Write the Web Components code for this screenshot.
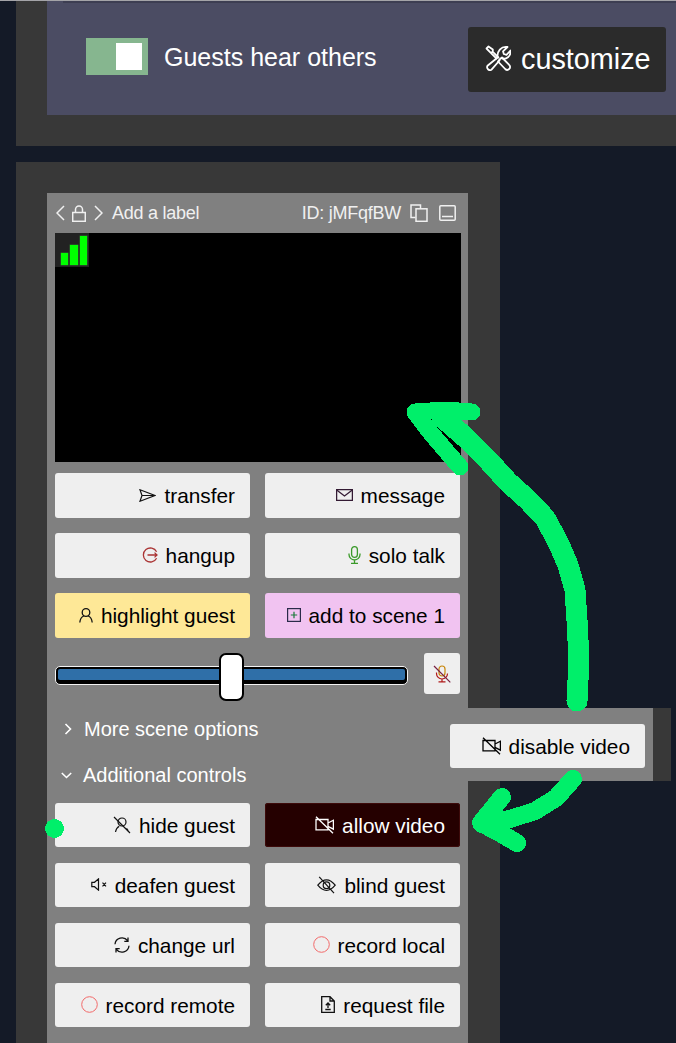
<!DOCTYPE html>
<html>
<head>
<meta charset="utf-8">
<style>
    html, body { margin: 0; height: 1043px; overflow: hidden; background: #141a27; }
    body { font-family: "Liberation Sans", Arial, sans-serif; position: relative; box-sizing: border-box; border-top: 1px solid #a4a4a8; }
</style>
</head>
<body>
<scene-panel>
    <toggle-row></toggle-row>
</scene-panel>
<guest-card>
    <ctrl-btn slot="main" icon="transfer">transfer</ctrl-btn>
    <ctrl-btn slot="main" icon="message">message</ctrl-btn>
    <ctrl-btn slot="main" icon="hangup">hangup</ctrl-btn>
    <ctrl-btn slot="main" icon="mic">solo talk</ctrl-btn>
    <ctrl-btn slot="main" icon="user" tone="yellow">highlight guest</ctrl-btn>
    <ctrl-btn slot="main" icon="plus" tone="pink">add to scene 1</ctrl-btn>
    <ctrl-btn slot="extra" short icon="userslash">hide guest</ctrl-btn>
    <ctrl-btn slot="extra" short icon="camslash" tone="dark">allow video</ctrl-btn>
    <ctrl-btn slot="extra" short icon="deafen">deafen guest</ctrl-btn>
    <ctrl-btn slot="extra" short icon="eyeslash">blind guest</ctrl-btn>
    <ctrl-btn slot="extra" short icon="sync">change url</ctrl-btn>
    <ctrl-btn slot="extra" short icon="record">record local</ctrl-btn>
    <ctrl-btn slot="extra" short icon="record">record remote</ctrl-btn>
    <ctrl-btn slot="extra" short icon="file">request file</ctrl-btn>
</guest-card>
<video-callout>
    <ctrl-btn short icon="camslash">disable video</ctrl-btn>
</video-callout>
<ink-arrows></ink-arrows>

<script>
    const icons = {
        transfer: `<svg width="17" height="13" viewBox="0 0 17 13" fill="none" stroke="#111" stroke-width="1.200"><path d="M1 .8 16 6.500 1 12.200 3 6.500ZM3 6.500H16"/></svg>`,
        message: `<svg width="17" height="12" viewBox="0 0 17 12" fill="none" stroke="#331a33" stroke-width="1.300"><rect x=".6" y=".6" width="15.800" height="10.800"/><path d="M1 1.200 8.500 7 16 1.200"/></svg>`,
        hangup: `<svg width="16" height="16" viewBox="0 0 16 16" fill="none" stroke="#a33" stroke-width="1.300"><path d="M14.600 4.800A7 7 0 1 0 14.600 11.200M5.500 8H15M12.500 5.600 15 8 12.500 10.400"/></svg>`,
        mic: `<svg width="13" height="18" viewBox="0 0 13 18" fill="none" stroke="#3a9a2a" stroke-width="1.300"><rect x="3.600" y=".7" width="5.800" height="10.600" rx="2.900"/><path d="M1 7.500V8.500A5.500 5.500 0 0 0 12 8.500V7.500M6.500 14V17M3 17.300H10"/></svg>`,
        user: `<svg width="14" height="15" viewBox="0 0 14 15" fill="none" stroke="#111" stroke-width="1.300"><circle cx="7" cy="4.500" r="3.800"/><path d="M.8 14.500C1.200 10.500 3.500 8.500 4.800 8M13.200 14.500C12.800 10.500 10.500 8.500 9.200 8"/></svg>`,
        plus: `<svg width="14" height="14" viewBox="0 0 14 14" fill="none" stroke="#2a2a4a" stroke-width="1.200"><rect x=".6" y=".6" width="12.800" height="12.800"/><path stroke="#1a7a3a" d="M7 3.800V10.200M3.800 7H10.200"/></svg>`,
        userslash: `<svg width="18" height="18" viewBox="0 0 18 18" fill="none" stroke="#111" stroke-width="1.200"><circle cx="9" cy="6" r="4"/><path d="M2.500 16C3 12.800 5 11 6.200 10.300M15.500 16C15.200 14.500 14.500 13.200 13.600 12.400M1 1 17 17"/></svg>`,
        camslash: `<svg width="19" height="18" viewBox="0 0 19 18" fill="none" stroke="currentColor" stroke-width="1.300"><path d="M1 .7 18 17.300M1 3.500V13.800H13V3.500ZM13 7 18.400 4.200V13.200L13 10.400"/></svg>`,
        deafen: `<svg width="16" height="13" viewBox="0 0 16 13" fill="none" stroke="#111" stroke-width="1.200"><path d="M.8 4.300H3.500L7.500 .9V12.100L3.500 8.700H.8ZM11.500 4.700 15 8.300M15 4.700 11.500 8.300"/></svg>`,
        eyeslash: `<svg width="19" height="18" viewBox="0 0 19 18" fill="none" stroke="#111" stroke-width="1.200"><path d="M.8 9.200C4 5 6.800 3.800 9.500 3.800S15 5 18.200 9.200C15 13.200 12.200 14.400 9.500 14.400S4 13.200 .8 9.200Z"/><circle cx="9.500" cy="9.200" r="3.300"/><path d="M2.200 .8 17 17.200"/></svg>`,
        sync: `<svg width="16" height="16" viewBox="0 0 16 16" fill="none" stroke="#111" stroke-width="1.300"><path d="M1 7.200A7 7 0 0 1 13.600 3.700M14 .6V4.300H10.300M15 8.800A7 7 0 0 1 2.400 12.300M2 15.400V11.700H5.700"/></svg>`,
        record: `<svg width="17" height="17" viewBox="0 0 17 17" fill="none" stroke="#f26a6a" stroke-width="1"><circle cx="8.500" cy="8.500" r="7.800"/></svg>`,
        file: `<svg width="14" height="17" viewBox="0 0 14 17" fill="none" stroke="#111" stroke-width="1.300"><path d="M.7.7H9L13.300 5V16.300H.7ZM9 .7V5H13.300"/><path d="M7 12V7.200M4.800 9.200 7 7 9.200 9.200M4.300 13.500H9.700"/></svg>`,
        mute: `<svg width="18" height="18" viewBox="0 0 18 18" fill="none" stroke-width="1.200"><g stroke="#c8860a"><rect x="6" y="1" width="6" height="10" rx="3"/></g><path stroke="#b01818" d="M3.500 7.500V8.500A5.500 5.500 0 0 0 14.500 8.500M9 14V16.500M5.500 16.800H12.500"/><path stroke="#7a2040" d="M1 1 17.300 17.300"/></svg>`
    }

    class SceneToggle extends HTMLElement {
        constructor() {
            super()
            this.attachShadow({ mode: 'open' }).innerHTML = `
                <style>
                    :host { display: flex; align-items: center; flex: 1; padding-left: 39px; color: #fff; font-size: 25px; }
                    .track { width: 62px; height: 37px; margin-bottom: 3px; background: #86b68f; display: flex; justify-content: flex-end; align-items: center; padding-right: 6px; box-sizing: border-box; }
                    .knob { width: 26px; height: 27px; background: #fff; }
                    span { margin-left: 16px; margin-bottom: 2px; }
                    button { all: unset; margin-left: auto; margin-right: 10px; margin-top: 3px; width: 198px; height: 65px; background: #2b2b2b; border-radius: 3px; display: flex; align-items: center; box-sizing: border-box; padding-left: 17px; font-size: 28.800px; color: #fff; gap: 10px; }
                    svg { display: block; margin-top: -3px; }
                </style>
                <div class="track"><div class="knob"></div></div>
                <span>Guests hear others</span>
                <button>
                    <svg width="26" height="26" viewBox="0 0 26 26" fill="none" stroke="#fff" stroke-width="1.800" stroke-linejoin="round" stroke-linecap="round">
                        <path d="M1.500 3.500 3.500 1.500 7.800 4.500 7.800 6.800 5.800 7.800ZM7.800 6.800 13.500 12.500M5.800 7.800 11.500 13.500"/>
                        <path d="M14.500 14.500 17 12.500 24.200 19.800A2.800 2.800 0 0 1 20.200 24L13 16.500Z"/>
                        <path d="M12 13 2.500 20.800A2.900 2.900 0 0 0 6.500 24.700L14.500 15.500"/>
                        <path d="M12.500 12.500C11.800 6.500 16 1 22.500 2L18 6.300 18.800 9 21.500 9.800 25.500 5.500C26.200 11.500 21 15 16.500 13.200"/>
                    </svg>
                    customize
                </button>
            `
        }
    }
    customElements.define('toggle-row', SceneToggle)

    class ScenePanel extends HTMLElement {
        constructor() {
            super()
            this.attachShadow({ mode: 'open' }).innerHTML = `
                <style>
                    :host { display: block; margin-left: 16px; height: 145px; background: #383838; padding: 0 0 31px 31px; box-sizing: border-box; }
                    .inner { height: 114px; background: #4b4c63; display: flex; align-items: center; position: relative; }
                    .strip { position: absolute; left: 16px; right: 0; top: 0; height: 2px; background: #3d3e52; }
                </style>
                <div class="inner"><div class="strip"></div><slot></slot></div>
            `
        }
    }
    customElements.define('scene-panel', ScenePanel)

    class CtrlBtn extends HTMLElement {
        constructor() {
            super()
            this.attachShadow({ mode: 'open' }).innerHTML = `
                <style>
                    :host { display: flex; justify-content: flex-end; align-items: center; gap: 8px; box-sizing: border-box; width: 195px; height: 45px; padding-right: 15px; background: #efefef; color: #000; border-radius: 3px; font-size: 20.800px; padding-top: 1px; }
                    :host([short]) { height: 44px; }
                    :host([tone=yellow]) { background: #fee897; }
                    :host([tone=pink]) { background: #f1c3f1; }
                    :host([tone=dark]) { background: #250000; color: #fff; box-shadow: inset 0 0 0 1px #3d0a0a; }
                    .icon { display: flex; margin-top: -2px; }
                    svg { display: block; }
                </style>
                <span class="icon"></span><slot></slot>
            `
            this.shadowRoot.querySelector('.icon').innerHTML = icons[this.getAttribute('icon')] || ''
        }
    }
    customElements.define('ctrl-btn', CtrlBtn)

    class VolumeRow extends HTMLElement {
        constructor() {
            super()
            this.attachShadow({ mode: 'open' }).innerHTML = `
                <style>
                    :host { display: flex; align-items: center; justify-content: space-between; width: 405px; height: 41px; margin-top: 15px; }
                    .track { position: relative; width: 353px; height: 19px; box-sizing: border-box; background: #000; border: 1px solid #f4f4f4; border-radius: 5px; padding: 2px 2px 4px; top: 2px; }
                    .fill { height: 100%; background: #2f6fa8; border-radius: 2px; }
                    .thumb { position: absolute; left: 163px; top: -14px; width: 25px; height: 48px; box-sizing: border-box; background: #fff; border: 2px solid #000; border-radius: 7px; }
                    .mute { width: 36px; height: 41px; background: #efefef; border-radius: 3px; display: flex; align-items: center; justify-content: center; }
                    svg { display: block; }
                </style>
                <div class="track"><div class="fill"></div><div class="thumb"></div></div>
                <div class="mute">${icons.mute}</div>
            `
        }
    }
    customElements.define('volume-row', VolumeRow)

    class SectionToggle extends HTMLElement {
        constructor() {
            super()
            const open = this.hasAttribute('open')
            this.attachShadow({ mode: 'open' }).innerHTML = `
                <style>
                    :host { display: flex; align-items: center; height: 46px; color: #fff; font-size: 20px; }
                    svg { display: block; }
                    .arrow { width: 28px; margin-left: ${open ? '6px' : '9px'}; margin-right: ${open ? '-6px' : '-8px'}; }
                </style>
                <div class="arrow">${open
                    ? `<svg width="11" height="7" viewBox="0 0 11 7" fill="none" stroke="#fff" stroke-width="1.600"><path d="M.8 1 5.500 5.500 10.200 1"/></svg>`
                    : `<svg width="8" height="12" viewBox="0 0 8 12" fill="none" stroke="#fff" stroke-width="1.600"><path d="M1.500 1 6.500 6 1.500 11"/></svg>`}</div>
                <slot></slot>
            `
        }
    }
    customElements.define('section-toggle', SectionToggle)

    class GuestCard extends HTMLElement {
        constructor() {
            super()
            this.attachShadow({ mode: 'open' }).innerHTML = `
                <style>
                    :host { display: block; margin: 16px 0 0 16px; width: 484px; height: 881px; background: #383838; padding: 31px 32px 0 31px; box-sizing: border-box; }
                    .card { background: #808080; height: 850px; padding: 0 7px 0 8px; box-sizing: border-box; }
                    header { height: 40px; display: flex; align-items: center; color: #f0f0f0; font-size: 18px; letter-spacing: -.25px; }
                    header svg { display: block; }
                    header span { margin-top: 1px; }
                    .left { display: flex; align-items: center; }
                    .id { margin-left: auto; display: flex; align-items: center; }
                    .video { height: 229px; background: #000; }
                    .signal { width: 34px; height: 34px; background: #222; display: flex; align-items: flex-end; gap: 2px; padding: 0 2px 2px 6px; box-sizing: border-box; }
                    .signal i { display: block; width: 7.500px; background: #0f0; box-shadow: 0 0 0 .5px #2a6a2a; }
                    .grid { display: grid; grid-template-columns: 195px 195px; column-gap: 15px; width: 405px; }
                    .main { row-gap: 15px; margin-top: 11px; }
                    .extra { row-gap: 16px; margin-top: 5px; }
                </style>
                <div class="card">
                    <header>
                        <div class="left">
                            <svg style="margin-left:1px" width="9" height="16" viewBox="0 0 9 16" fill="none" stroke="#f0f0f0" stroke-width="1.500"><path d="M8 1 1 8 8 15"/></svg>
                            <svg style="margin-left:7px" width="14" height="17" viewBox="0 0 14 17" fill="none" stroke="#f0f0f0" stroke-width="1.500"><rect x=".7" y="7.500" width="12.600" height="8.800"/><path d="M3.500 7.500V4.500A3.500 3.500 0 0 1 10.500 4.500V7.500"/></svg>
                            <svg style="margin-left:8px" width="9" height="16" viewBox="0 0 9 16" fill="none" stroke="#f0f0f0" stroke-width="1.500"><path d="M1 1 8 8 1 15"/></svg>
                            <span style="margin-left:9px">Add a label</span>
                        </div>
                        <div class="id">
                            <span>ID: jMFqfBW</span>
                            <svg style="margin-left:9px" width="18" height="18" viewBox="0 0 18 18" fill="none" stroke="#f0f0f0" stroke-width="1.500"><path d="M5.500 13.500H1V1H10.500V4.500"/><rect x="6" y="4.800" width="11" height="12.500"/></svg>
                            <svg style="margin-left:11px;margin-right:5px" width="17" height="16" viewBox="0 0 17 16" fill="none" stroke="#f0f0f0" stroke-width="1.500"><rect x=".8" y=".8" width="15.400" height="14.400" rx="1"/><path d="M3 11.500H14"/></svg>
                        </div>
                    </header>
                    <div class="video">
                        <div class="signal"><i style="height:12px"></i><i style="height:20px"></i><i style="height:29px"></i></div>
                    </div>
                    <div class="grid main"><slot name="main"></slot></div>
                    <volume-row></volume-row>
                    <div style="height:12px"></div>
                    <section-toggle>More scene options</section-toggle>
                    <section-toggle open>Additional controls</section-toggle>
                    <div class="grid extra"><slot name="extra"></slot></div>
                </div>
            `
        }
    }
    customElements.define('guest-card', GuestCard)

    // detached "disable video" sample pasted over the card edge
    class VideoCallout extends HTMLElement {
        constructor() {
            super()
            this.attachShadow({ mode: 'open' }).innerHTML = `
                <style>
                    :host { position: absolute; left: 468px; top: 707px; width: 203px; height: 73px; background: #808080; border-right: 18px solid #383838; box-sizing: border-box; }
                    ::slotted(ctrl-btn) { position: absolute; left: -18px; top: 16px; }
                </style>
                <slot></slot>
            `
        }
    }
    customElements.define('video-callout', VideoCallout)

    // hand drawn green annotations on top of everything
    class InkArrows extends HTMLElement {
        constructor() {
            super()
            this.attachShadow({ mode: 'open' }).innerHTML = `
                <style>
                    :host { position: absolute; left: 0; top: -1px; width: 676px; height: 1043px; pointer-events: none; }
                    svg { display: block; }
                </style>
                <svg width="676" height="1043" viewBox="0 0 676 1043" fill="none" stroke="#00ef6a" stroke-linecap="round" stroke-linejoin="round" shape-rendering="crispEdges">
                    <path stroke-width="21" d="M577 701 579 660 577 620 575 590 568 565 558 542 545 518 528 500 508 482 488 460 466 438 442 417"/>
                    <path stroke-width="17" d="M472 412 445 410 415 412 430 432 447 452 460 467"/>
                    <path stroke-width="18" d="M573 779 556 798 535 811 510 819 482 824"/>
                    <path stroke-width="18" d="M502 797 481 823 500 833 517 843"/>
                    <circle cx="54.500" cy="828.500" r="9.500" fill="#00ef6a" stroke="none"/>
                </svg>
            `
        }
    }
    customElements.define('ink-arrows', InkArrows)
</script>
</body>
</html>
